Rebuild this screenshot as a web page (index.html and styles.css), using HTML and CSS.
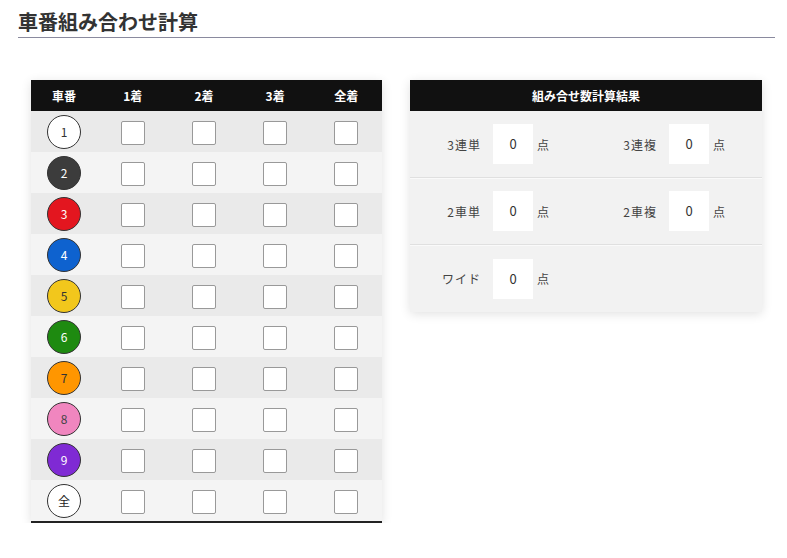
FILE: index.html
```html
<!DOCTYPE html>
<html lang="ja">

<head>
    <meta charset="UTF-8">
    <meta name="viewport" content="width=device-width, initial-scale=1.0">
    <title>車番組み合わせ計算</title>
    <link rel="stylesheet" href="styles.css">
</head>

<body>
    <div class="page">
        <h2 class="title">車番組み合わせ計算</h2>
        <div class="content">
            <table class="car-table">
                <thead>
                    <tr>
                        <th class="col-num">車番</th>
                        <th>1着</th>
                        <th>2着</th>
                        <th>3着</th>
                        <th>全着</th>
                    </tr>
                </thead>
                <tbody id="carRows"></tbody>
            </table>

            <div class="result-box">
                <div class="result-head">組み合せ数計算結果</div>
                <div class="result-row">
                    <div class="result-item"><span class="label">3連単</span><span class="count">0</span><span class="unit">点</span></div>
                    <div class="result-item"><span class="label">3連複</span><span class="count">0</span><span class="unit">点</span></div>
                </div>
                <div class="result-row">
                    <div class="result-item"><span class="label">2車単</span><span class="count">0</span><span class="unit">点</span></div>
                    <div class="result-item"><span class="label">2車複</span><span class="count">0</span><span class="unit">点</span></div>
                </div>
                <div class="result-row last">
                    <div class="result-item"><span class="label">ワイド</span><span class="count">0</span><span class="unit">点</span></div>
                </div>
            </div>
        </div>
    </div>
    <script>
        const cars = ['1', '2', '3', '4', '5', '6', '7', '8', '9', '全'];
        const body = document.getElementById('carRows');
        cars.forEach((c, i) => {
            let row = document.createElement('tr');
            row.innerHTML = `
                <td><span class="num num-${i + 1}">${c}</span></td>
                <td><input type="checkbox"></td>
                <td><input type="checkbox"></td>
                <td><input type="checkbox"></td>
                <td><input type="checkbox"></td>
            `;
            body.appendChild(row);
        });
    </script>
</body>

</html>
```

FILE: styles.css
```css
body {
    font-family: "Noto Sans CJK JP", "Noto Sans", sans-serif;
    background-color: #fff;
    color: #333;
    margin: 0;
}

.page {
    padding: 8px 12px 0 18px;
}

.title {
    margin: 0;
    font-size: 20px;
    line-height: 28px;
    font-weight: bold;
    color: #333;
    padding-bottom: 1px;
    border-bottom: 1px solid #8a8a9e;
}

.content {
    display: flex;
    align-items: flex-start;
    gap: 28px;
    margin-top: 42px;
    padding-left: 13px;
}

.car-table {
    width: 351px;
    border-collapse: collapse;
    box-shadow: 0px 2px 10px rgba(0, 0, 0, 0.12);
    border-bottom: 2px solid #222;
}

.car-table th {
    background-color: #111;
    color: #fff;
    font-size: 12px;
    font-weight: bold;
    height: 31px;
    padding: 0;
    width: 71px;
}

.car-table th.col-num {
    width: 66px;
}

.car-table td {
    height: 41px;
    padding: 0;
    text-align: center;
}

.car-table tbody tr:nth-child(odd) {
    background-color: #eaeaea;
}

.car-table tbody tr:nth-child(even) {
    background-color: #f4f4f4;
}

.car-table input {
    appearance: none;
    -webkit-appearance: none;
    width: 24px;
    height: 24px;
    margin: 0;
    background: #fff;
    border: 1px solid #999;
    border-radius: 2px;
    vertical-align: middle;
}

.num {
    display: inline-flex;
    align-items: center;
    justify-content: center;
    width: 32px;
    height: 32px;
    border: 1px solid #333;
    border-radius: 50%;
    font-size: 12px;
    vertical-align: middle;
    color: #fff;
}

.num-1 { background: #fff; color: #333; }
.num-2 { background: #3c3c3c; }
.num-3 { background: #e3161f; }
.num-4 { background: #0e62cf; }
.num-5 { background: #f2c71c; color: #333; }
.num-6 { background: #1e8a10; }
.num-7 { background: #ff9600; color: #333; }
.num-8 { background: #f086bf; color: #444; }
.num-9 { background: #7f2ad4; }
.num-10 { background: #fff; color: #222; }

.result-box {
    width: 352px;
    background-color: #f2f2f2;
    box-shadow: 0px 2px 10px rgba(0, 0, 0, 0.12);
}

.result-head {
    background-color: #111;
    color: #fff;
    font-size: 12px;
    font-weight: bold;
    height: 31px;
    line-height: 31px;
    text-align: center;
}

.result-row {
    display: flex;
    height: 66px;
    align-items: center;
    border-bottom: 1px solid #e0e0e0;
    box-shadow: 0 1px 0 #fafafa;
}

.result-row.last {
    border-bottom: none;
    box-shadow: none;
    height: 67px;
}

.result-item {
    width: 176px;
    display: flex;
    align-items: center;
    font-size: 12px;
    color: #444;
}

.label {
    width: 71px;
    text-align: right;
    letter-spacing: 1px;
}

.count {
    width: 40px;
    height: 40px;
    line-height: 40px;
    margin-left: 12px;
    background: #fff;
    text-align: center;
    font-size: 13px;
    color: #333;
}

.unit {
    margin-left: 4px;
}
```
